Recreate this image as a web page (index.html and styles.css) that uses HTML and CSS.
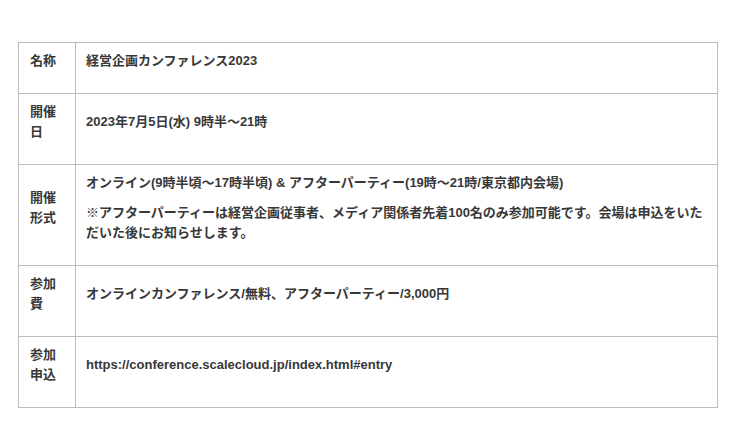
FILE: index.html
```html
<!DOCTYPE html>
<html lang="ja">
<head>
<meta charset="utf-8">
<link rel="stylesheet" href="styles.css">
</head>
<body>
<table class="info">
  <tr>
    <th>名称</th>
    <td><p>経営企画カンファレンス2023</p></td>
  </tr>
  <tr>
    <th>開催日</th>
    <td><p>2023年7月5日(水) 9時半〜21時</p></td>
  </tr>
  <tr>
    <th>開催形式</th>
    <td>
      <p>オンライン(9時半頃〜17時半頃) &amp; アフターパーティー(19時〜21時/東京都内会場)</p>
      <p>※アフターパーティーは経営企画従事者、メディア関係者先着100名のみ参加可能です。会場は申込をいただいた後にお知らせします。</p>
    </td>
  </tr>
  <tr>
    <th>参加費</th>
    <td><p>オンラインカンファレンス/無料、アフターパーティー/3,000円</p></td>
  </tr>
  <tr>
    <th>参加申込</th>
    <td><p>https://conference.scalecloud.jp/index.html#entry</p></td>
  </tr>
</table>
</body>
</html>
```
FILE: styles.css
```css
html, body {
  margin: 0;
  background: #ffffff;
}
body {
  padding: 42px 0 0 18px;
  font-family: "Liberation Sans", "Noto Sans CJK JP", sans-serif;
  font-size: 13px;
  font-weight: bold;
  line-height: 20px;
  color: #383838;
}
.info {
  border-collapse: collapse;
  width: 700px;
  table-layout: fixed;
}
.info th,
.info td {
  border: 1px solid #bcbcbc;
  padding: 8px 10px 22px 10px;
  vertical-align: middle;
  text-align: left;
  font-weight: bold;
}
.info th {
  width: 36px;
  padding-left: 11px;
  padding-right: 9px;
}
.info p {
  margin: 0;
}
.info p + p {
  margin-top: 10px;
}
.amp {
  word-spacing: 3px;
}
```
